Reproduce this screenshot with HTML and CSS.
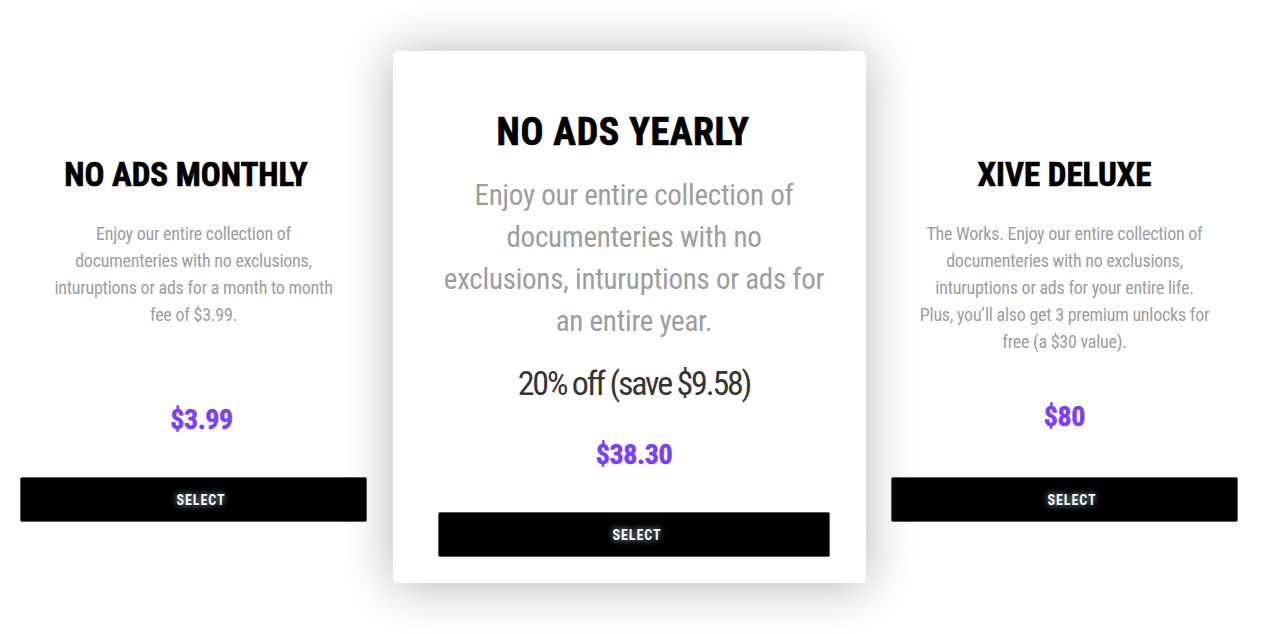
FILE: index.html
```html
<!DOCTYPE html>
<html lang="en">
<head>
<meta charset="utf-8">
<title>Plans</title>
<link rel="stylesheet" href="styles.css">
</head>
<body>
<main class="plans">
  <section class="plan plan-side">
    <h2 class="plan-title title-monthly">NO ADS MONTHLY</h2>
    <p class="plan-desc">Enjoy our entire collection of<br>documenteries with no exclusions,<br>inturuptions or ads for a month to month<br>fee of $3.99.</p>
    <div class="plan-price price-monthly">$3.99</div>
    <button class="select-btn">SELECT</button>
  </section>

  <section class="plan plan-featured">
    <h2 class="plan-title">NO ADS YEARLY</h2>
    <p class="plan-desc">Enjoy our entire collection of<br>documenteries with no<br>exclusions, inturuptions or ads for<br>an entire year.</p>
    <p class="plan-discount">20% off (save $9.58)</p>
    <div class="plan-price price-yearly">$38.30</div>
    <button class="select-btn">SELECT</button>
  </section>

  <section class="plan plan-side">
    <h2 class="plan-title">XIVE DELUXE</h2>
    <p class="plan-desc">The Works. Enjoy our entire collection of<br>documenteries with no exclusions,<br>inturuptions or ads for your entire life.<br>Plus, you’ll also get 3 premium unlocks for<br>free (a $30 value).</p>
    <div class="plan-price price-deluxe">$80</div>
    <button class="select-btn">SELECT</button>
  </section>
</main>
</body>
</html>
```
FILE: styles.css
```css
* { box-sizing: border-box; }

html, body {
  margin: 0;
  padding: 0;
  background: #ffffff;
}

body {
  font-family: "Roboto Condensed", "Liberation Sans", sans-serif;
  color: #000;
}

.plans {
  display: flex;
  align-items: flex-start;
  gap: 25px;
  min-height: 634px;
  padding: 51px 28px 0 20px;
}

.plan {
  display: flex;
  flex-direction: column;
  align-items: stretch;
  text-align: center;
}

.plan-side {
  width: 347px;
  margin-top: 104px;
}

.plan-featured {
  width: 473px;
  margin-left: 1px;
  background: #fff;
  border-radius: 5px;
  padding: 58px 36px 26px 45px;
  box-shadow: 0 2px 50px rgba(0, 0, 0, 0.3);
}

.plan-title {
  margin: 0;
  font-weight: 700;
  font-size: 33px;
  line-height: 40px;
  letter-spacing: 0;
  color: #000;
  -webkit-text-stroke: 0.7px #000;
}

.title-monthly { margin-right: 15px; }

.plan-featured .plan-title {
  font-size: 38px;
  line-height: 46px;
  letter-spacing: 0.6px;
  margin-right: 22px;
}

.plan-desc {
  margin: 25px 0 0;
  font-size: 18px;
  line-height: 27px;
  letter-spacing: -0.25px;
  color: #9d9d9d;
  white-space: nowrap;
}

.plan-featured .plan-desc {
  margin-top: 19px;
  font-size: 29px;
  line-height: 42px;
  letter-spacing: -0.25px;
}

.plan-discount {
  margin: 20px 0 0;
  font-size: 34px;
  line-height: 42px;
  letter-spacing: -2.2px;
  color: #353535;
}

.plan-price {
  font-weight: 700;
  font-size: 28px;
  line-height: 34px;
  letter-spacing: -0.4px;
  color: #7b3ff5;
  -webkit-text-stroke: 0.5px #7b3ff5;
}

.price-monthly { margin: 75px 0 0 16px; }
.price-yearly { margin-top: 34px; }
.price-deluxe { margin-top: 45px; }

.select-btn {
  display: block;
  width: 100%;
  height: 45px;
  margin-top: 40px;
  padding: 0 0 0 15px;
  background: #000;
  border: 1px solid #5a5a5a;
  border-radius: 2px;
  color: #f4f8fb;
  font-family: "Roboto Condensed", "Liberation Sans", sans-serif;
  font-weight: 700;
  font-size: 14px;
  letter-spacing: 0.9px;
  text-shadow: 0 0 6px rgba(190, 225, 240, 0.75), 0 0 12px rgba(160, 210, 230, 0.35);
  cursor: pointer;
}

.plan-featured .select-btn { padding-left: 6px; }

.price-deluxe + .select-btn { margin-top: 43px; }
```
